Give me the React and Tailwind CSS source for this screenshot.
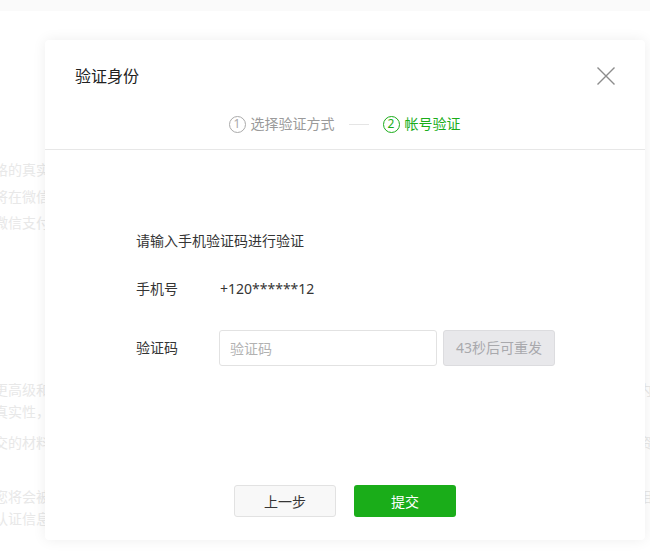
import React from 'react';

const FONT = "font-['Noto_Sans','Noto_Sans_CJK_SC',sans-serif]";

// faint page text behind the dialog: [marginTop, text]
const BG_LINES = [
  [149, '格的真实性进行审核，审核通过后将获得相应的认证标识'],
  [7, '将在微信公众平台展示你的认证信息与资质'],
  [6, '微信支付商户号需与认证主体保持一致'],
  [147, '更高级和更完善的接口能力，认证审核将对你提交的资料进行核实确认并保证其真实有效，请你知悉以下内容并确认无误后提交申请'],
  [2, '真实性，'],
  [11, '交的材料将用于审核与认证，平台将严格保护你的隐私信息，不会用于其他任何用途，请你放心提交相关资料并耐心等待审核结果'],
  [34, '您将会被要求支付审核服务费用，审核结果将通过站内信与短信的方式通知你，请你注意查收并及时处理相关事项与提示'],
  [2, '认证信息'],
];

function CloseIcon() {
  return (
    <svg width="18" height="18" viewBox="0 0 18 18" className="shrink-0">
      <path d="M0.5 0.5L17.5 17.5M17.5 0.5L0.5 17.5" stroke="#8c8c8c" strokeWidth="1.4" fill="none" />
    </svg>
  );
}

function StepNum({ n, active }) {
  return (
    <span
      className={`flex items-center justify-center w-[17px] h-[17px] rounded-full border text-[12px] leading-none ${
        active ? 'border-[#1aad19] text-[#1aad19]' : 'border-[#aaaaaa] text-[#aaaaaa]'
      }`}
    >
      {n}
    </span>
  );
}

export default function App() {
  return (
    <div className={`relative h-[553px] w-[650px] overflow-hidden bg-white ${FONT}`}>
      <div className="h-[11px] bg-[#fafafa]" />
      <div className="ml-[-6px]">
        {BG_LINES.map(([mt, t], i) => (
          <p key={i} style={{ marginTop: mt }} className="text-[14px] leading-[20px] whitespace-nowrap text-[#e8e8e8]">
            {t}
          </p>
        ))}
      </div>

      <div className="absolute left-[45px] top-[40px] w-[600px] h-[500px] bg-white rounded-[4px] shadow-[0_0_14px_rgba(0,0,0,0.07)] flex flex-col">
        <div className="pt-[26px] pb-[15px] border-b border-[#e7e7e7]">
          <div className="flex items-center justify-between px-[30px]">
            <h2 className="text-[16px] leading-[20px] text-[#222222]">验证身份</h2>
            <CloseIcon />
          </div>
          <div className="mt-[28px] flex items-center justify-center h-[20px] text-[14px] leading-[20px] pr-[1px]">
            <div className="flex items-center gap-[5px] text-[#9a9a9a]">
              <StepNum n="1" />
              <span>选择验证方式</span>
            </div>
            <span className="mx-[14px] w-[20px] h-px bg-[#e5e5e5]" />
            <div className="flex items-center gap-[5px] text-[#1aad19]">
              <StepNum n="2" active />
              <span>帐号验证</span>
            </div>
          </div>
        </div>

        <div className="flex-1 pl-[91px] pt-[81px] text-[14px] leading-[20px] text-[#353535]">
          <p>请输入手机验证码进行验证</p>
          <div className="mt-[28px] flex">
            <span className="w-[84px]">手机号</span>
            <span>+120******12</span>
          </div>
          <div className="mt-[31px] flex items-center">
            <span className="w-[83px]">验证码</span>
            <input
              className="w-[218px] h-[36px] px-[10px] border border-[#e2e2e2] rounded-[3px] text-[14px] text-[#353535] placeholder:text-[#b2b2b2] outline-none"
              placeholder="验证码"
            />
            <button className="ml-[6px] w-[112px] h-[36px] rounded-[3px] border border-[#dcdcdf] bg-[#e8e8eb] text-[14px] text-[#a9a9ad]">
              43秒后可重发
            </button>
          </div>
        </div>

        <div className="pb-[23px] flex justify-center gap-[18px]">
          <button className="w-[102px] h-[32px] rounded-[3px] border border-[#e2e2e2] bg-[#f8f8f8] text-[14px] text-[#353535]">
            上一步
          </button>
          <button className="w-[102px] h-[32px] rounded-[3px] bg-[#1aad19] text-[14px] text-white">
            提交
          </button>
        </div>
      </div>
    </div>
  );
}
